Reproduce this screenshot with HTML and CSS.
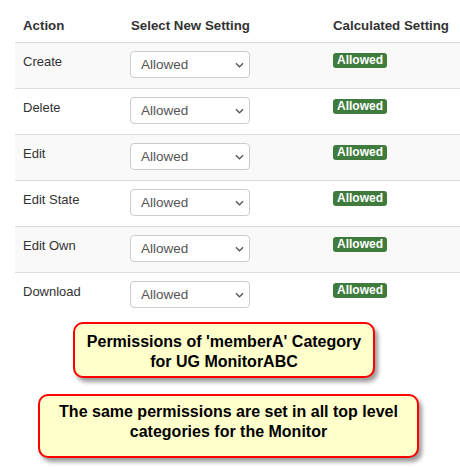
FILE: index.html
```html
<!DOCTYPE html>
<html>
<head>
<meta charset="utf-8">
<link rel="stylesheet" href="styles.css">
</head>
<body>
<div class="page">
  <table class="perm">
    <thead>
      <tr><th class="c1">Action</th><th class="c2">Select New Setting</th><th class="c3">Calculated Setting</th></tr>
    </thead>
    <tbody>
      <tr><td>Create</td><td><div class="sel">Allowed<svg viewBox="0 0 10 6" class="chev"><path d="M1 1l4 4 4-4"/></svg></div></td><td><span class="badge">Allowed</span></td></tr>
      <tr><td>Delete</td><td><div class="sel">Allowed<svg viewBox="0 0 10 6" class="chev"><path d="M1 1l4 4 4-4"/></svg></div></td><td><span class="badge">Allowed</span></td></tr>
      <tr><td>Edit</td><td><div class="sel">Allowed<svg viewBox="0 0 10 6" class="chev"><path d="M1 1l4 4 4-4"/></svg></div></td><td><span class="badge">Allowed</span></td></tr>
      <tr><td>Edit State</td><td><div class="sel">Allowed<svg viewBox="0 0 10 6" class="chev"><path d="M1 1l4 4 4-4"/></svg></div></td><td><span class="badge">Allowed</span></td></tr>
      <tr><td>Edit Own</td><td><div class="sel">Allowed<svg viewBox="0 0 10 6" class="chev"><path d="M1 1l4 4 4-4"/></svg></div></td><td><span class="badge">Allowed</span></td></tr>
      <tr><td>Download</td><td><div class="sel">Allowed<svg viewBox="0 0 10 6" class="chev"><path d="M1 1l4 4 4-4"/></svg></div></td><td><span class="badge">Allowed</span></td></tr>
    </tbody>
  </table>
  <div class="note note1">Permissions of 'memberA' Category<br>for UG MonitorABC</div>
  <div class="note note2">The same permissions are set in all top level<br>categories for the Monitor</div>
</div>
</body>
</html>
```
FILE: styles.css
```css
html, body {
  margin: 0;
  padding: 0;
  background: #fff;
  overflow: hidden;
}
.page {
  width: 460px;
  height: 469px;
  overflow: hidden;
  font-family: "Liberation Sans", Arial, sans-serif;
  color: #333;
}
.perm {
  margin-left: 15px;
  border-collapse: collapse;
  width: 470px;
  table-layout: fixed;
  font-size: 13px;
  line-height: 20px;
}
.perm thead tr { height: 42px; }
.perm th {
  text-align: left;
  font-weight: bold;
  font-size: 13.3px;
  padding: 0 8px 6px 8px;
  border-bottom: 1px solid #ddd;
  vertical-align: bottom;
}
.c1 { width: 92px; }
.c2 { width: 186px; }
.perm tbody tr { height: 46px; }
.perm td {
  padding: 0 8px;
  border-top: 1px solid #ddd;
  vertical-align: top;
}
.perm tbody tr:first-child td { border-top: none; }
.perm tbody tr:nth-child(odd) td { background: #f9f9f9; }
.perm td:first-child { padding-top: 9px; }
.cellwrap { }
.sel {
  position: relative;
  box-sizing: border-box;
  width: 120px;
  height: 27px;
  margin-left: -1px;
  margin-top: 8px;
  border: 1px solid #ccc;
  border-radius: 4px;
  background: #fff;
  padding: 4px 0 0 10px;
  color: #555;
  font-size: 13.5px;
  line-height: 18px;
}
.chev {
  position: absolute;
  right: 5px;
  top: 10px;
  width: 9px;
  height: 6px;
  fill: none;
  stroke: #555;
  stroke-width: 1.4;
}
.badge {
  display: inline-block;
  margin-top: 10px;
  background: #3e7b3c;
  color: #fff;
  font-weight: bold;
  font-size: 12px;
  line-height: 15px;
  padding: 0 4px;
  border-radius: 3px;
}
.note {
  box-sizing: border-box;
  background: #ffffcc;
  border: 2px solid #ff0000;
  border-radius: 10px;
  box-shadow: 3px 4px 4px rgba(0,0,0,0.4);
  color: #000;
  font-weight: bold;
  font-size: 16px;
  line-height: 20px;
  text-align: center;
}
.note1 {
  margin: 4px 0 0 73px;
  width: 302px;
  height: 56px;
  padding-top: 8px;
}
.note2 {
  margin: 16px 0 0 38px;
  width: 381px;
  height: 64px;
  padding-top: 6px;
}
```
